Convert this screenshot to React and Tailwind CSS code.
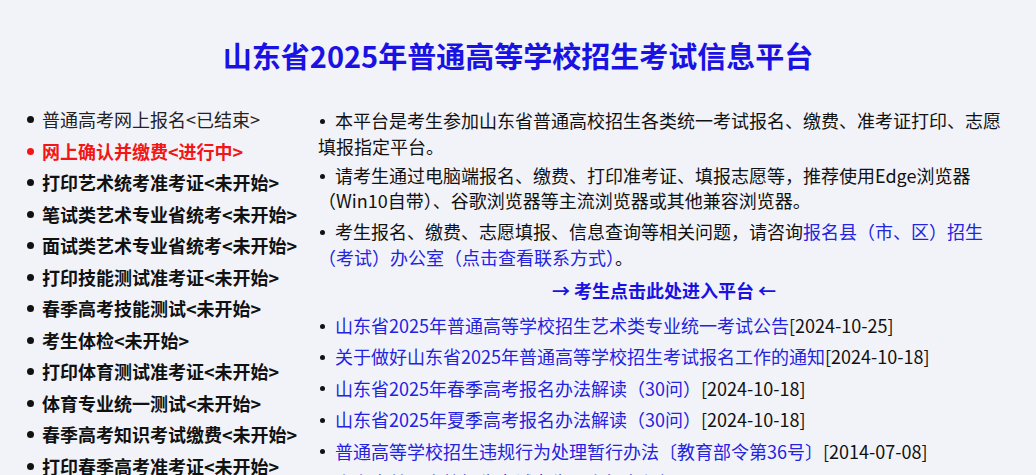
import React from "react";

const steps = [
  { text: "普通高考网上报名<已结束>", tone: "done" },
  { text: "网上确认并缴费<进行中>", tone: "active" },
  { text: "打印艺术统考准考证<未开始>" },
  { text: "笔试类艺术专业省统考<未开始>" },
  { text: "面试类艺术专业省统考<未开始>" },
  { text: "打印技能测试准考证<未开始>" },
  { text: "春季高考技能测试<未开始>" },
  { text: "考生体检<未开始>" },
  { text: "打印体育测试准考证<未开始>" },
  { text: "体育专业统一测试<未开始>" },
  { text: "春季高考知识考试缴费<未开始>" },
  { text: "打印春季高考准考证<未开始>" },
  { text: "夏季高考知识考试缴费<未开始>" },
];

const notices = [
  { title: "山东省2025年普通高等学校招生艺术类专业统一考试公告", date: "2024-10-25" },
  { title: "关于做好山东省2025年普通高等学校招生考试报名工作的通知", date: "2024-10-18" },
  { title: "山东省2025年春季高考报名办法解读（30问）", date: "2024-10-18" },
  { title: "山东省2025年夏季高考报名办法解读（30问）", date: "2024-10-18" },
  { title: "普通高等学校招生违规行为处理暂行办法〔教育部令第36号〕", date: "2014-07-08" },
  { title: "山东省普通高校招生考试考生网上报名须知", date: "2024-10-18" },
];

const Dot = () => (
  <span className="inline-block w-[5px] h-[5px] rounded-full bg-[#111] align-middle mr-[10px] ml-[2px] relative -top-[2px]" />
);

const App = () => {
  return (
    <div className="min-h-screen bg-[#f2f3f9] font-['Noto_Sans_CJK_SC',sans-serif] text-[#111]">
      {/* Title */}
      <h1 className="pt-[30px] h-[104px] text-center text-[29px] leading-[50px] font-bold text-[#1a12e2]">
        山东省2025年普通高等学校招生考试信息平台
      </h1>

      <div className="flex">
        {/* Steps */}
        <ul className="w-[318px] shrink-0 pl-[27px]">
          {steps.map((s) => (
            <li
              key={s.text}
              className={
                "flex items-center h-[31.5px] text-[18px] " +
                (s.tone === "done"
                  ? "text-[#222] font-normal"
                  : s.tone === "active"
                  ? "text-[#f21616] font-bold"
                  : "text-[#111] font-bold")
              }
            >
              <span
                className={
                  "w-[7px] h-[7px] rounded-full mr-[8px] " +
                  (s.tone === "active" ? "bg-[#f21616]" : "bg-[#111]")
                }
              />
              {s.text}
            </li>
          ))}
        </ul>

        {/* Info */}
        <div className="flex-1 pr-[26px] pt-[3px] text-[18px]">
          <p className="leading-[26px] mb-[4px]">
            <Dot />
            本平台是考生参加山东省普通高校招生各类统一考试报名、缴费、准考证打印、志愿填报指定平台。
          </p>
          <p className="leading-[25px] mb-[5px]">
            <Dot />
            请考生通过电脑端报名、缴费、打印准考证、填报志愿等，推荐使用Edge浏览器（Win10自带）、谷歌浏览器等主流浏览器或其他兼容浏览器。
          </p>
          <p className="leading-[26px]">
            <Dot />
            考生报名、缴费、志愿填报、信息查询等相关问题，请咨询
            <a href="#" className="text-[#2323e0]">
              报名县（市、区）招生（考试）办公室（点击查看联系方式）
            </a>
            。
          </p>
          <p className="mt-[7px] leading-[26px] text-center font-bold">
            <a href="#" className="text-[#1a12e2]">
              → 考生点击此处进入平台 ←
            </a>
          </p>
          <ul className="mt-[7px]">
            {notices.map((n) => (
              <li key={n.title} className="h-[31.4px] leading-[31px] whitespace-nowrap">
                <Dot />
                <a href="#" className="text-[#2323e0]">
                  {n.title}
                </a>
                [{n.date}]
              </li>
            ))}
          </ul>
        </div>
      </div>
    </div>
  );
};

export default App;
